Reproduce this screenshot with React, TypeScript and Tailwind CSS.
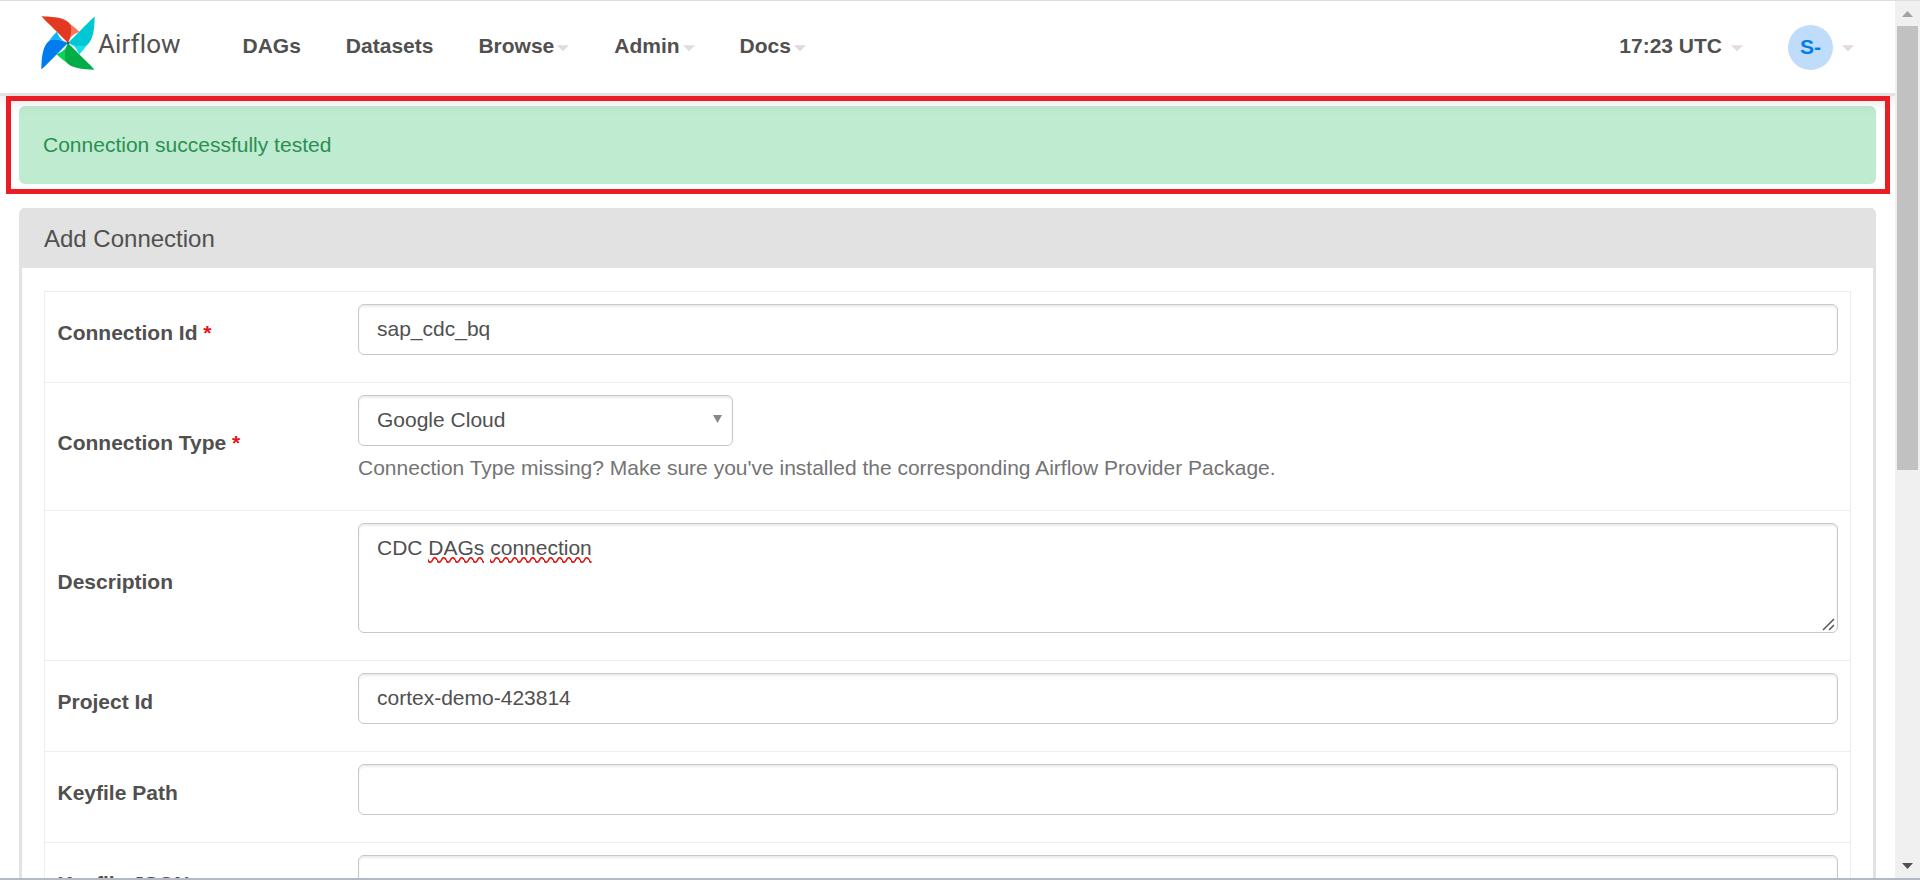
import type { ReactNode } from "react";

function Caret({ className = "" }: { className?: string }) {
  return (
    <svg className={className} width="12" height="7" viewBox="0 0 12 7">
      <path d="M0 0.3H12L6 6.3Z" fill="#e3d8e3" />
    </svg>
  );
}

const blades = [
  { turn: "rotate(0 27 27)", dark: "#e43921", light: "#ff7557" },
  { turn: "rotate(90 27 27)", dark: "#00c7d4", light: "#11e1ee" },
  { turn: "rotate(180 27 27)", dark: "#00ad46", light: "#04d659" },
  { turn: "rotate(270 27 27)", dark: "#017cee", light: "#0cb6ff" },
];

function Pinwheel() {
  return (
    <svg width="54" height="54" viewBox="0 0 54 54" className="shrink-0">
      {blades.map((b) => (
        <path key={b.dark} transform={b.turn} d="M0.500 0.300C13 0.600 24 1.500 29.500 8.500C32.500 13 30 21 27 27L15.800 15.800C11 11 5.500 6 0.500 0.300Z" fill={b.dark} />
      ))}
      {blades.map((b) => (
        <path key={b.light} transform={b.turn} d="M29 8C33 10.500 36 13.500 38.500 16C33 17.500 29 21 27 27C30 21 32 13 29 8Z" fill={b.light} />
      ))}
      <circle cx="27" cy="27" r="1.2" fill="#51504f" />
    </svg>
  );
}

function NavItem({ label, caret = false }: { label: string; caret?: boolean }) {
  return (
    <div className="flex items-center">
      <span>{label}</span>
      {caret && <Caret className="ml-[3px] mt-1" />}
    </div>
  );
}

function Misspelled({ id, children }: { id: string; children: string }) {
  return (
    <span className="relative inline-block">
      {children}
      <svg className="absolute left-0 top-[24px] h-[6px] w-full">
        <defs>
          <pattern id={id} width="9" height="6" patternUnits="userSpaceOnUse">
            <path d="M-2.250 3C-1 0 1 0 2.250 3S5.500 6 6.750 3S10 0 11.250 3" transform="translate(-2.250 0)" stroke="#e01010" strokeWidth="1.6" fill="none" />
          </pattern>
        </defs>
        <rect width="100%" height="6" fill={`url(#${id})`} />
      </svg>
    </span>
  );
}

function Row({ label, required = false, className, children }: { label: string; required?: boolean; className: string; children?: ReactNode }) {
  return (
    <div className={`flex shrink-0 border-b border-[#eeeeee] ${className}`}>
      <div className="flex w-[313px] shrink-0 items-center pb-2 pl-[12.5px] text-[21px] font-bold leading-[30px]">
        <span>
          {label}
          {required && <span className="text-[#e8121a]"> *</span>}
        </span>
      </div>
      <div className="min-w-0 flex-1 pr-3 pt-3">{children}</div>
    </div>
  );
}

const field =
  "rounded-[6px] border border-[#c8c8c8] bg-white pl-[18px] text-[21px] shadow-[inset_0_2px_2px_rgba(0,0,0,0.075)]";

function TextField({ value = "" }: { value?: string }) {
  return <div className={`${field} flex h-[51px] items-center pb-px`}>{value}</div>;
}

export default function App() {
  return (
    <div className="relative flex h-[880px] w-[1920px] flex-col overflow-hidden bg-white font-['Liberation_Sans',sans-serif] text-[#51504f]">
      <div className="h-px shrink-0 bg-[#dddddd]" />
      <div className="flex min-h-0 flex-1">
        <div className="flex w-[1895px] shrink-0 flex-col overflow-hidden">
          <header className="relative flex h-[95px] shrink-0 items-start border-b-[3px] border-[#e2e2e2] pl-[41px] text-[21px] font-bold shadow-[0_4px_16px_rgba(0,0,0,0.12)]">
            <div className="flex w-[201.5px] gap-[3px] pt-[15px]">
              <Pinwheel />
              <span className="pt-[10px] font-['Roboto',sans-serif] text-[26px] font-normal leading-[36px] tracking-[0.1px]">Airflow</span>
            </div>
            <nav className="flex h-[90px] items-center gap-[45px]">
              <NavItem label="DAGs" />
              <NavItem label="Datasets" />
              <NavItem label="Browse" caret />
              <NavItem label="Admin" caret />
              <NavItem label="Docs" caret />
            </nav>
            <div className="ml-auto flex h-[90px] items-center pr-[41px]">
              <span>17:23 UTC</span>
              <Caret className="ml-[9px] mt-1" />
              <div className="ml-[45px] mt-[3px] flex size-[45px] items-center justify-center rounded-full bg-[#bfddfb] pb-px text-[#017cee]">S-</div>
              <Caret className="ml-[9px] mt-1" />
            </div>
          </header>
          <main className="flex flex-1 flex-col pl-[19px] pr-[19px] pt-[10px]">
            <div className="flex h-[78px] shrink-0 items-center rounded-[6px] bg-[#bfebd1] pl-[24px] text-[21px] text-[#2b8f51]">
              Connection successfully tested
            </div>
            <section className="mt-6 flex flex-col rounded-t-[6px] border-x-[3px] border-[#e2e2e2]">
              <h1 className="flex h-[60px] items-center bg-[#e2e2e2] pl-[22px] pt-[2px] text-[24px]">Add Connection</h1>
              <div className="px-[22px] pt-[23px]">
                <div className="flex flex-col border-x border-t border-[#eeeeee]">
                  <Row label="Connection Id" required className="h-[91px]">
                    <TextField value="sap_cdc_bq" />
                  </Row>
                  <Row label="Connection Type" required className="h-[128px]">
                    <div className={`${field} flex h-[51px] w-[375px] items-center justify-between pb-px pr-[10px]`}>
                      <span>Google Cloud</span>
                      <svg width="9" height="8" viewBox="0 0 9 8" className="mb-[3px]">
                        <path d="M0 0H9L4.500 8Z" fill="#888888" />
                      </svg>
                    </div>
                    <p className="mt-[7px] text-[21px] leading-[30px] text-[#747474]">
                      Connection Type missing? Make sure you've installed the corresponding Airflow Provider Package.
                    </p>
                  </Row>
                  <Row label="Description" className="h-[150px]">
                    <div className={`${field} relative h-[110px] pt-[9px] leading-[30px]`}>
                      CDC <Misspelled id="wave-dags">DAGs</Misspelled> <Misspelled id="wave-connection">connection</Misspelled>
                      <svg width="13" height="13" viewBox="0 0 13 13" className="absolute bottom-px right-[2px]">
                        <path d="M1 12L12 1M7 12L12 7" stroke="#555555" strokeWidth="1.500" fill="none" />
                      </svg>
                    </div>
                  </Row>
                  <Row label="Project Id" className="h-[91px]">
                    <TextField value="cortex-demo-423814" />
                  </Row>
                  <Row label="Keyfile Path" className="h-[91px]">
                    <TextField />
                  </Row>
                  <Row label="Keyfile JSON" className="h-[91px]">
                    <TextField />
                  </Row>
                </div>
              </div>
            </section>
          </main>
        </div>
        <div className="flex w-[25px] flex-col items-center bg-[#f0f0f0]">
          <div className="flex h-[25px] items-center">
            <svg width="11" height="6" viewBox="0 0 11 6"><path d="M0 6H11L5.500 0Z" fill="#a3a3a3" /></svg>
          </div>
          <div className="h-[444px] w-[21px] bg-[#c1c1c1]" />
          <div className="mt-auto flex h-[25px] items-center">
            <svg width="11" height="6" viewBox="0 0 11 6"><path d="M0 0H11L5.500 6Z" fill="#505050" /></svg>
          </div>
        </div>
      </div>
      <div className="h-[2px] shrink-0 bg-[#b3bac3]" />
      <div className="absolute left-[6px] top-[96px] h-[98px] w-[1884px] border-[5px] border-[#ec1c24]" />
    </div>
  );
}
